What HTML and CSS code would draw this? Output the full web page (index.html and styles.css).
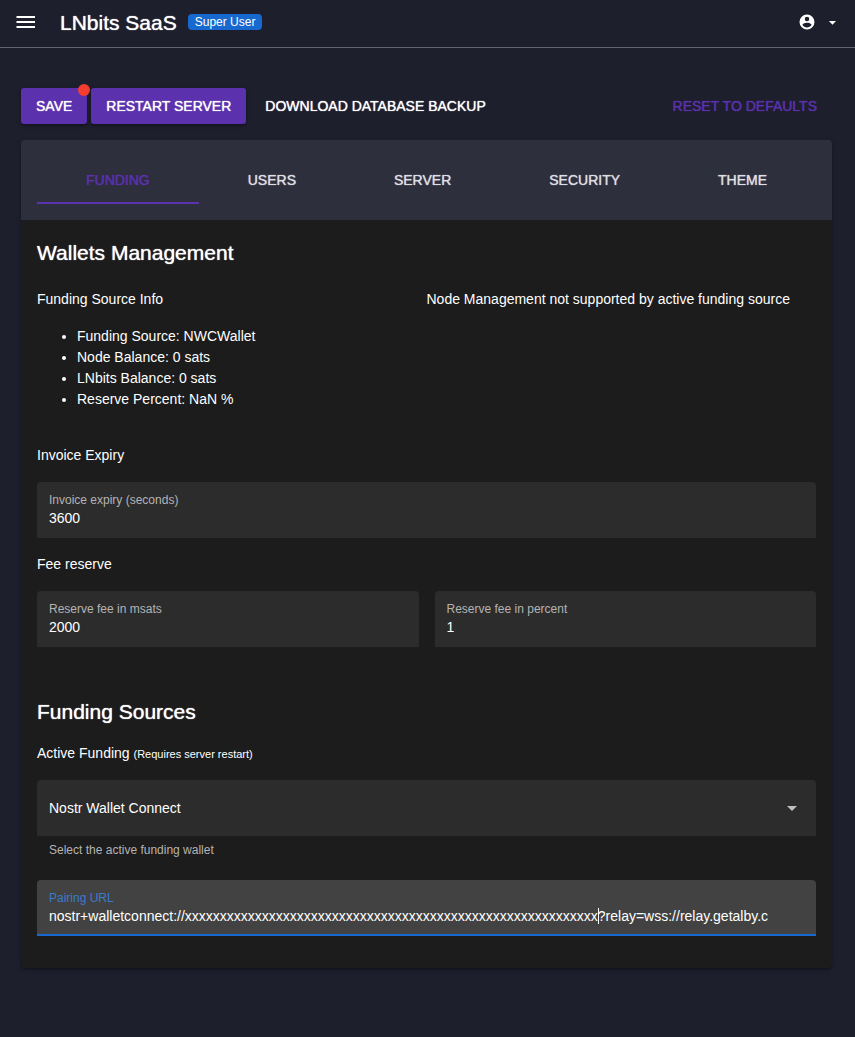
FILE: index.html
```html
<!DOCTYPE html>
<html lang="en">
<head>
<meta charset="utf-8">
<meta name="viewport" content="width=device-width, initial-scale=1">
<title>LNbits SaaS</title>
<link rel="stylesheet" href="styles.css">
</head>
<body>
<header class="topbar">
  <button class="icon-button" type="button" aria-label="Menu">
    <svg class="icon" viewBox="0 0 24 24" aria-hidden="true"><path d="M2.500 18h18.500v-2H2.500v2zm0-5h18.500v-2H2.500v2zm0-7v2h18.500V6H2.500z"/></svg>
  </button>
  <a class="brand" href="#">LNbits SaaS</a>
  <span class="badge">Super User</span>
  <button class="account" type="button" aria-label="Account">
    <svg class="icon-account" viewBox="0 0 24 24" aria-hidden="true"><path fill-rule="evenodd" d="M12 2a10 10 0 1 0 0 20 10 10 0 0 0 0-20zm0 3a3 3 0 1 1 0 6 3 3 0 0 1 0-6zm0 14.200c-2.500 0-4.710-1.280-6-3.220.030-1.990 4-3.080 6-3.080s5.970 1.090 6 3.080c-1.290 1.940-3.500 3.220-6 3.220z"/></svg>
    <svg class="icon-caret" viewBox="0 0 24 24" aria-hidden="true"><path d="M7 10l5 5 5-5z"/></svg>
  </button>
</header>
<main class="page">
  <div class="actions">
    <button class="btn btn-primary" type="button">Save<span class="dot"></span></button>
    <button class="btn btn-primary" type="button">Restart server</button>
    <a class="btn btn-download" href="#">Download database backup</a>
    <button class="btn btn-reset" type="button">Reset to defaults</button>
  </div>
  <section class="card">
    <nav class="tabs">
      <button class="tab tab-active" type="button">Funding</button>
      <button class="tab" type="button">Users</button>
      <button class="tab" type="button">Server</button>
      <button class="tab" type="button">Security</button>
      <button class="tab" type="button">Theme</button>
    </nav>
    <div class="panel">
      <h2 class="title">Wallets Management</h2>
      <div class="columns info">
        <div>
          <p class="text">Funding Source Info</p>
          <ul class="list">
            <li>Funding Source: NWCWallet</li>
            <li>Node Balance: 0 sats</li>
            <li>LNbits Balance: 0 sats</li>
            <li>Reserve Percent: NaN %</li>
          </ul>
        </div>
        <p class="text node-note">Node Management not supported by active funding source</p>
      </div>
      <p class="text">Invoice Expiry</p>
      <label class="field"><span class="label">Invoice expiry (seconds)</span><input class="input" type="text" value="3600"></label>
      <p class="text">Fee reserve</p>
      <div class="columns">
        <label class="field"><span class="label">Reserve fee in msats</span><input class="input" type="text" value="2000"></label>
        <label class="field"><span class="label">Reserve fee in percent</span><input class="input" type="text" value="1"></label>
      </div>
      <h2 class="title title-sources">Funding Sources</h2>
      <p class="text">Active Funding <small class="small">(Requires server restart)</small></p>
      <div class="select-field">
        <select class="select" aria-label="Active funding" aria-describedby="funding-hint"><option>Nostr Wallet Connect</option></select>
        <svg class="select-arrow" viewBox="0 0 24 24" aria-hidden="true"><path d="M7 10l5 5 5-5z"/></svg>
      </div>
      <p class="hint" id="funding-hint">Select the active funding wallet</p>
      <label class="field field-focused"><span class="label">Pairing URL</span><input class="input" type="text" value="nostr+walletconnect://xxxxxxxxxxxxxxxxxxxxxxxxxxxxxxxxxxxxxxxxxxxxxxxxxxxxxxxxxxx?relay=wss://relay.getalby.c"><span class="caret"></span></label>
    </div>
  </section>
</main>
</body>
</html>
```
FILE: styles.css
```css
* { box-sizing: border-box; }
body {
  margin: 0;
  min-height: 100vh;
  background: #1e1f2d;
  color: #fff;
  font: 14px/21px "Liberation Sans", Arial, sans-serif;
}
button, input, select { font: inherit; color: inherit; border: 0; background: none; padding: 0; margin: 0; }
svg { fill: currentColor; flex: none; }
a { color: inherit; text-decoration: none; }

.topbar {
  display: flex;
  align-items: center;
  height: 48px;
  padding: 0 14px;
  border-bottom: 1px solid #626370;
}
.icon-button { display: flex; padding-bottom: 4px; }
.icon { width: 24px; height: 24px; }
.brand { margin-left: 22px; padding-bottom: 2px; font-size: 21px; line-height: 32px; text-shadow: 0 0 1px #fff; }
.badge {
  margin: 0 0 4px 11px;
  padding: 2px 7px;
  border-radius: 4px;
  background: #1769cf;
  font-size: 12px;
  line-height: 12px;
}
.account { display: flex; align-items: center; gap: 8px; margin-left: auto; padding-bottom: 3px; }
.icon-account { width: 18px; height: 18px; }
.icon-caret { width: 17px; height: 17px; }

.page { padding: 40px 23px 48px 21px; }
.actions { display: flex; align-items: center; gap: 4px; margin-bottom: 16px; }
.btn {
  position: relative;
  min-height: 36px;
  padding: 8px 15px;
  border-radius: 3px;
  line-height: 20px;
  text-transform: uppercase;
  white-space: nowrap;
  text-shadow: 0 0 1px currentColor;
}
.btn-primary {
  background: #5b31ad;
  box-shadow: 0 1px 5px rgba(0,0,0,.2), 0 2px 2px rgba(0,0,0,.14), 0 3px 1px -2px rgba(0,0,0,.12);
}
.dot { position: absolute; top: -4px; right: -3px; width: 12px; height: 12px; border-radius: 50%; background: #f43c30; }
.btn-reset { margin-left: auto; color: #5b31ad; }

.card {
  border-radius: 4px;
  background: #1c1c1c;
  box-shadow: 0 1px 5px rgba(0,0,0,.2), 0 2px 2px rgba(0,0,0,.14), 0 3px 1px -2px rgba(0,0,0,.12);
}
.tabs { display: flex; padding: 16px; border-radius: 4px 4px 0 0; background: #2e2f3d; }
.tab {
  flex: 1 1 auto;
  height: 48px;
  padding: 0 16px;
  border-bottom: 2px solid transparent;
  border-top: 2px solid transparent;
  color: #dfdfe3;
  text-transform: uppercase;
  text-shadow: 0 0 1px currentColor;
}
.tab-active { color: #5b31ad; border-bottom-color: #5b31ad; }

.panel { padding: 17px 16px 32px; }
.title { margin: 0 0 20px; font-size: 21px; line-height: 32px; font-weight: 400; text-shadow: 0 0 1px #fff; }
.title-sources { margin: 33px 0 15px; }
.text { margin: 0 0 16px; }
.small { font-size: 11px; line-height: 11px; }
.columns { display: grid; grid-template-columns: 1fr 1fr; gap: 16px; }
.info { margin-bottom: 35px; gap: 0; }
.list { margin: 0; padding-left: 40px; }

.field {
  position: relative;
  display: flex;
  flex-direction: column;
  height: 56px;
  margin-bottom: 16px;
  padding: 9px 12px 0;
  border-radius: 4px 4px 0 0;
  background: #2c2c2c;
}
.label { color: #b4b4b4; font-size: 12px; line-height: 18px; }
.input { width: 100%; height: 18px; line-height: 18px; outline: 0; }
.field-focused { margin-bottom: 0; background: #424242; border-bottom: 2px solid #1769cf; }
.field-focused .label { color: #3a7bcd; }
.caret { position: absolute; left: 561px; top: 28px; width: 1px; height: 16px; background: #fff; }
.select-field { position: relative; }
.select { width: 100%; height: 56px; padding: 0 12px; border-radius: 4px 4px 0 0; background: #2c2c2c; appearance: none; }
.select-arrow { position: absolute; right: 12px; top: 16px; width: 24px; height: 24px; color: #bfbfbf; pointer-events: none; }
.hint { margin: 5px 12px 21px; color: #b4b4b4; font-size: 12px; line-height: 18px; }
```
